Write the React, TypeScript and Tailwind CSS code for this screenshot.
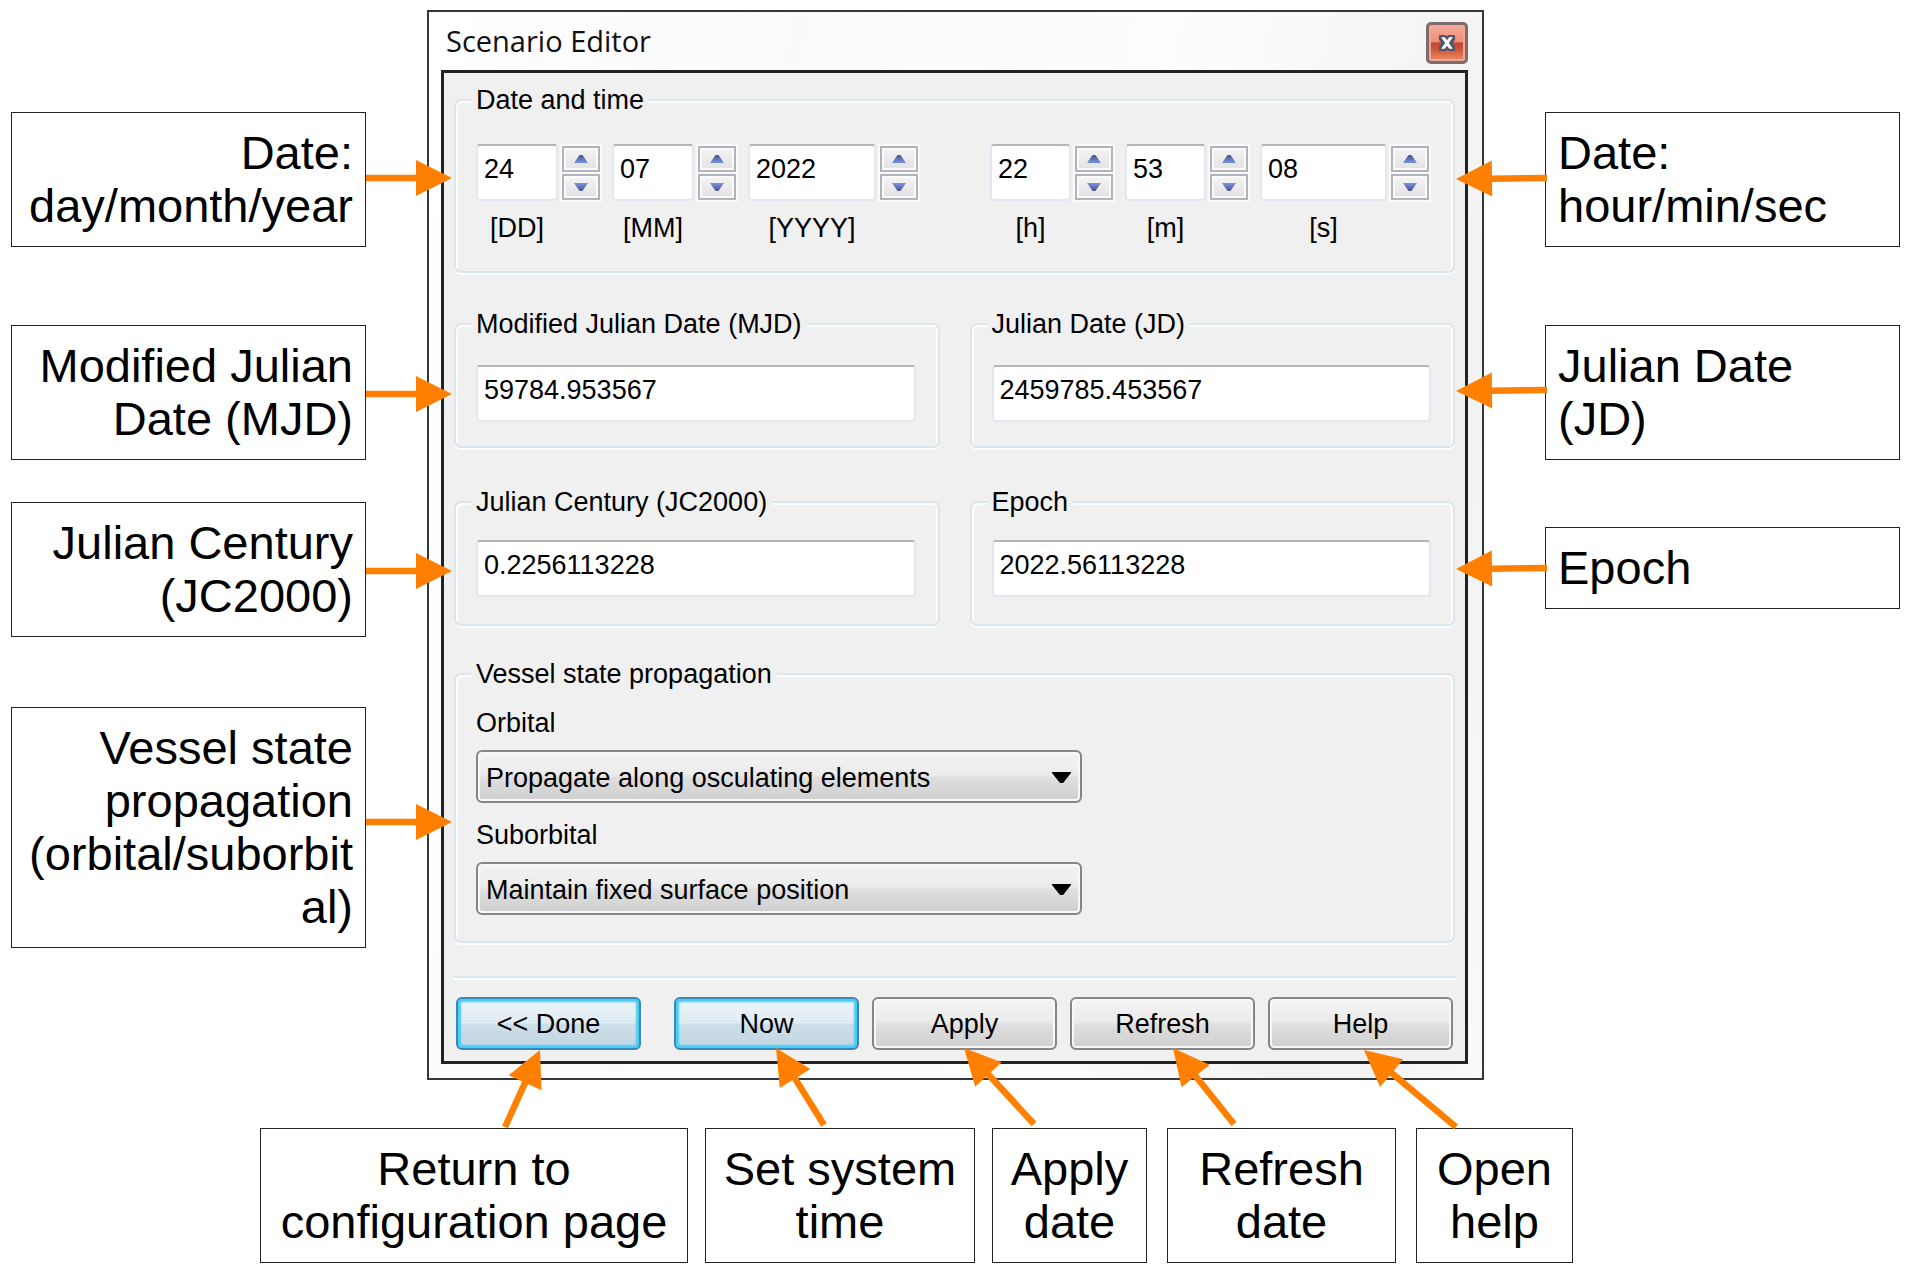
import React from "react";

type Point = [number, number];

/* Orange pointer; coordinates are relative to the callout that owns it. */
function Arrow({ tail, tip }: { tail: Point; tip: Point }) {
  const dx = tip[0] - tail[0];
  const dy = tip[1] - tail[1];
  const len = Math.hypot(dx, dy);
  const ux = dx / len;
  const uy = dy / len;
  const base: Point = [tip[0] - ux * 36, tip[1] - uy * 36];
  const a: Point = [base[0] - uy * 18, base[1] + ux * 18];
  const b: Point = [base[0] + uy * 18, base[1] - ux * 18];
  return (
    <svg
      aria-hidden="true"
      className="pointer-events-none absolute top-0 left-0 z-10 size-px overflow-visible"
    >
      <line
        x1={tail[0]}
        y1={tail[1]}
        x2={base[0] + ux * 2}
        y2={base[1] + uy * 2}
        stroke="#ff8000"
        strokeWidth="6.5"
      />
      <polygon points={`${tip} ${a} ${b}`} fill="#ff8000" />
    </svg>
  );
}

function Callout({
  lines,
  className,
  tail,
  tip,
}: {
  lines: string[];
  className: string;
  tail: Point;
  tip: Point;
}) {
  return (
    <div
      className={`relative border border-[#222] bg-white px-3 pt-[13px] pb-[14px] text-[47px] leading-[53px] whitespace-nowrap text-black ${className}`}
    >
      {lines.map((line) => (
        <p key={line}>{line}</p>
      ))}
      <Arrow tail={tail} tip={tip} />
    </div>
  );
}

function Group({
  title,
  className,
  children,
}: {
  title: string;
  className: string;
  children: React.ReactNode;
}) {
  return (
    <fieldset
      className={`min-w-0 rounded-[7px] border-2 border-[#dae5ec] pr-[22px] pl-5 shadow-[inset_2px_2px_0_#fcfcfc,inset_-2px_0_0_#fcfcfc,0_2px_0_#fcfcfc] ${className}`}
    >
      <legend className="-ml-[5px] bg-[#f0f0f0] px-[5px]">{title}</legend>
      {children}
    </fieldset>
  );
}

const inputClass =
  "block h-[57px] rounded-[4px] border-2 border-[#e3e7ef] border-t-[#b4b5ba] bg-white pb-[7px] pl-[6px] text-black outline-none";

function SpinButton({ label, up }: { label: string; up: boolean }) {
  return (
    <button
      type="button"
      aria-label={label}
      className="flex h-[26px] w-[38px] items-center justify-center border-2 border-[#b3b4bb] bg-linear-to-b from-[#f4f4f4] to-[#e2e2e2] shadow-[inset_0_0_0_2px_#fafafa,0_0_0_2px_#fafafa]"
    >
      <svg viewBox="0 0 14 8" className="h-2 w-3.5" aria-hidden="true">
        <defs>
          <linearGradient id={up ? "spinUp" : "spinDown"} x1="0" y1="0" x2="0" y2="1">
            <stop offset="0" stopColor={up ? "#4a5484" : "#7b93e6"} />
            <stop offset="1" stopColor={up ? "#7b93e6" : "#4a5484"} />
          </linearGradient>
        </defs>
        <path
          d={up ? "M0 8 L5.5 0 H8.5 L14 8 Z" : "M0 0 H14 L8.5 8 H5.5 Z"}
          fill={up ? "url(#spinUp)" : "url(#spinDown)"}
        />
      </svg>
    </button>
  );
}

function SpinField({
  id,
  value,
  unit,
  width,
}: {
  id: string;
  value: string;
  unit: string;
  width: string;
}) {
  return (
    <div className="flex gap-1">
      <div className={width}>
        <input id={id} defaultValue={value} className={`w-full ${inputClass}`} />
        <label htmlFor={id} className="mt-[11px] block text-center">
          {unit}
        </label>
      </div>
      <div className="flex flex-col gap-[2px] pt-[2px] pr-[2px]">
        <SpinButton up label={`Increase ${unit}`} />
        <SpinButton up={false} label={`Decrease ${unit}`} />
      </div>
    </div>
  );
}

function ValueGroup({
  title,
  value,
  className,
}: {
  title: string;
  value: string;
  className: string;
}) {
  return (
    <Group title={title} className={className}>
      <input aria-label={title} defaultValue={value} className={`w-full ${inputClass}`} />
    </Group>
  );
}

function Dropdown({ id, label, value }: { id: string; label: string; value: string }) {
  return (
    <div className="w-[606px] max-w-full">
      <label htmlFor={id} className="block">
        {label}
      </label>
      <div className="relative mt-[11px]">
        <select
          id={id}
          className="block h-[53px] w-full appearance-none rounded-[6px] border-2 border-[#868686] bg-[linear-gradient(#f4f4f4,#ebebeb_46%,#dedede_54%,#cfcfcf)] pt-0.5 pl-2 text-black shadow-[inset_0_0_0_2px_#f8f8f8] outline-none"
        >
          <option>{value}</option>
        </select>
        <svg
          viewBox="0 0 19 11"
          aria-hidden="true"
          className="pointer-events-none absolute top-[22px] right-[11px] h-[11px] w-[19px]"
        >
          <path d="M0 0 H19 V1 L11 11 H8 L0 1 Z" fill="#000" />
        </svg>
      </div>
    </div>
  );
}

function ActionButton({ label, primary = false }: { label: string; primary?: boolean }) {
  return (
    <button
      type="button"
      className={`h-[53px] w-[185px] rounded-[6px] border-2 text-black ${
        primary
          ? "border-[#3d86b8] bg-[linear-gradient(#eef5f8,#dfecf3_48%,#cddfe9_52%,#c3d6e1)] shadow-[inset_0_0_2px_3px_#45cdf5]"
          : "border-[#868686] bg-[linear-gradient(#f4f4f4,#ebebeb_46%,#dedede_54%,#cfcfcf)] shadow-[inset_0_0_0_2px_#f8f8f8]"
      }`}
    >
      {label}
    </button>
  );
}

function ScenarioEditor() {
  return (
    <section
      aria-label="Scenario Editor"
      className="min-w-0 flex-1 border-2 border-[#333838] bg-[linear-gradient(100deg,#ffffff,#fafafa_30%,#fdfdfd_60%,#f2f2f2_90%,#fafafa)] pr-[14px] pb-[14px] pl-3"
    >
      <header className="flex h-[58px] items-center justify-between pl-[5px]">
        <h1 className="font-['Open_Sans','Noto_Sans',sans-serif] text-[29px] leading-[38px] text-[#111]">
          Scenario Editor
        </h1>
        <button
          type="button"
          aria-label="Close"
          className="mt-1 flex size-[42px] items-center justify-center rounded-[5px] border-3 border-[#7d6c6c] bg-[linear-gradient(#f7ab9b,#ee8d78_46%,#c4472b_50%,#d1583a_70%,#ee8e70)] shadow-[inset_0_0_0_2px_#f3a795]"
        >
          <svg viewBox="0 0 20 20" className="h-[18px] w-5" aria-hidden="true">
            <path
              d="M2 2 H8 L10 4 L12 2 H18 V6 L15 10 L18 14 V18 H12 L10 16 L8 18 H2 V14 L5 10 L2 6 Z"
              fill="#50586b"
              stroke="#50586b"
              strokeWidth="2"
              strokeLinejoin="round"
            />
            <path
              d="M3.500 3.500 H7.500 L10 7 L12.500 3.500 H16.500 L12 10 L16.500 16.500 H12.500 L10 13 L7.500 16.500 H3.500 L8 10 Z"
              fill="#fff"
            />
          </svg>
        </button>
      </header>

      <div className="border-3 border-[#222] bg-[#f0f0f0] px-[10px] pt-[11px] pb-[11px] text-[27px] leading-8 text-black">
        <Group title="Date and time" className="pt-[28px] pb-[27px]">
          <div className="flex justify-between">
            <div className="flex gap-[10px]">
              <SpinField id="day" value="24" unit="[DD]" width="w-[82px]" />
              <SpinField id="month" value="07" unit="[MM]" width="w-[82px]" />
              <SpinField id="year" value="2022" unit="[YYYY]" width="w-[128px]" />
            </div>
            <div className="flex gap-[10px]">
              <SpinField id="hour" value="22" unit="[h]" width="w-[81px]" />
              <SpinField id="minute" value="53" unit="[m]" width="w-[81px]" />
              <SpinField id="second" value="08" unit="[s]" width="w-[127px]" />
            </div>
          </div>
        </Group>

        <div className="mt-[35px] grid grid-cols-2 gap-x-[30px] gap-y-[38px]">
          <ValueGroup title="Modified Julian Date (MJD)" value="59784.953567" className="pt-[25px] pb-6" />
          <ValueGroup title="Julian Date (JD)" value="2459785.453567" className="pt-[25px] pb-6" />
          <ValueGroup title="Julian Century (JC2000)" value="0.2256113228" className="pt-[22px] pb-[27px]" />
          <ValueGroup title="Epoch" value="2022.56113228" className="pt-[22px] pb-[27px]" />
        </div>

        <Group title="Vessel state propagation" className="mt-8 pt-[17px] pb-[26px]">
          <div className="flex flex-col gap-4">
            <Dropdown id="orbital" label="Orbital" value="Propagate along osculating elements" />
            <Dropdown id="suborbital" label="Suborbital" value="Maintain fixed surface position" />
          </div>
        </Group>

        <hr className="mt-[33px] h-1 border-t-2 border-b-2 border-t-[#dae5ec] border-b-[#fcfcfc]" />

        <div className="mt-[17px] flex justify-between px-[2px]">
          <ActionButton label="<< Done" primary />
          <div className="flex gap-[13px]">
            <ActionButton label="Now" primary />
            <ActionButton label="Apply" />
            <ActionButton label="Refresh" />
            <ActionButton label="Help" />
          </div>
        </div>
      </div>
    </section>
  );
}

export default function App() {
  return (
    <main className="bg-white px-[11px] py-[10px] font-['Liberation_Sans',Arial,sans-serif]">
      <div className="flex items-start gap-[61px]">
        <div className="flex w-[355px] shrink-0 flex-col pt-[102px] text-right">
          <Callout lines={["Date:", "day/month/year"]} className="" tail={[354, 65]} tip={[440, 65]} />
          <Callout lines={["Modified Julian", "Date (MJD)"]} className="mt-[78px]" tail={[354, 68]} tip={[440, 68]} />
          <Callout lines={["Julian Century", "(JC2000)"]} className="mt-[42px]" tail={[354, 68]} tip={[440, 68]} />
          <Callout
            lines={["Vessel state", "propagation", "(orbital/suborbit", "al)"]}
            className="mt-[70px]"
            tail={[354, 114]}
            tip={[440, 114]}
          />
        </div>

        <ScenarioEditor />

        <div className="flex w-[355px] shrink-0 flex-col pt-[102px] text-left">
          <Callout lines={["Date:", "hour/min/sec"]} className="" tail={[1, 65]} tip={[-90, 66]} />
          <Callout lines={["Julian Date", "(JD)"]} className="mt-[78px]" tail={[1, 64]} tip={[-90, 65]} />
          <Callout lines={["Epoch"]} className="mt-[67px]" tail={[1, 40]} tip={[-90, 41]} />
        </div>
      </div>

      <div className="mt-12 ml-[249px] flex text-center">
        <Callout lines={["Return to", "configuration page"]} className="w-[428px]" tail={[244, -2]} tip={[279, -79]} />
        <Callout lines={["Set system", "time"]} className="ml-[17px] w-[270px]" tail={[118, -4]} tip={[70, -81]} />
        <Callout lines={["Apply", "date"]} className="ml-[17px] w-[155px]" tail={[41, -5]} tip={[-29, -81]} />
        <Callout lines={["Refresh", "date"]} className="ml-5 w-[229px]" tail={[66, -5]} tip={[5, -81]} />
        <Callout lines={["Open", "help"]} className="ml-5 w-[157px]" tail={[39, -2]} tip={[-53, -79]} />
      </div>
    </main>
  );
}
